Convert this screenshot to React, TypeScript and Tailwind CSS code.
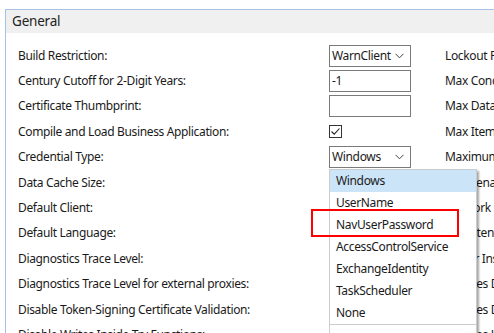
import React from 'react';

type Row = {
  label: string;
  control: React.ReactNode;
  right: string;
};

const font = { fontFamily: '"Noto Sans", "Open Sans", sans-serif' };

function Chevron(): React.ReactElement {
  return (
    <svg width="9" height="6" viewBox="0 0 9 6" className="shrink-0">
      <path d="M0.5 0.8 L4.5 4.8 L8.5 0.8" fill="none" stroke="#444" strokeWidth="1" />
    </svg>
  );
}

function Select({ value }: { value: string }): React.ReactElement {
  return (
    <div className="flex h-[22px] w-[82px] items-center justify-between border border-[#7a7a7a] bg-white pl-[2px] pr-[6px]">
      <span>{value}</span>
      <Chevron />
    </div>
  );
}

function TextBox({ value }: { value: string }): React.ReactElement {
  return (
    <div className="flex h-[22px] w-[82px] items-center border border-[#7a7a7a] bg-white pl-[2px]">
      {value}
    </div>
  );
}

function CheckBox(): React.ReactElement {
  return (
    <div className="flex h-[13px] w-[13px] items-center justify-center border border-[#333] bg-white">
      <svg width="11" height="11" viewBox="0 0 11 11">
        <path d="M1.5 5.5 L4.2 8.2 L9.5 2.5" fill="none" stroke="#222" strokeWidth="1.1" />
      </svg>
    </div>
  );
}

const options = [
  'Windows',
  'UserName',
  'NavUserPassword',
  'AccessControlService',
  'ExchangeIdentity',
  'TaskScheduler',
  'None',
];

function DropDown(): React.ReactElement {
  return (
    <div className="absolute left-0 top-[23px] z-10 w-[148px] border border-[#cccccc] bg-white shadow-[2px_2px_2px_rgba(0,0,0,0.35)]">
      {options.map((o, i) => (
        <div
          key={o}
          className={`flex h-[22px] items-center pl-[6px] ${i === 0 ? 'bg-[#cce4f7]' : ''}`}
        >
          {o}
        </div>
      ))}
      <div className="h-[1px] bg-[#cccccc]" />
      <div className="h-[30px]" />
    </div>
  );
}

const rows: Row[] = [
  { label: 'Build Restriction:', control: <Select value="WarnClient" />, right: 'Lockout Policy Count:' },
  { label: 'Century Cutoff for 2-Digit Years:', control: <TextBox value="-1" />, right: 'Max Concurrent Calls:' },
  { label: 'Certificate Thumbprint:', control: <TextBox value="" />, right: 'Max Data Rows Allowed:' },
  { label: 'Compile and Load Business Application:', control: <CheckBox />, right: 'Max Items in Object Graph:' },
  {
    label: 'Credential Type:',
    control: (
      <div className="relative">
        <Select value="Windows" />
        <DropDown />
      </div>
    ),
    right: 'Maximum Stream Size:',
  },
  { label: 'Data Cache Size:', control: null, right: 'Multitenant:' },
  { label: 'Default Client:', control: null, right: 'Network Protocol:' },
  { label: 'Default Language:', control: null, right: 'Persistent Interval:' },
  { label: 'Diagnostics Trace Level:', control: null, right: 'Server Instance:' },
  { label: 'Diagnostics Trace Level for external proxies:', control: null, right: 'Services Default Company:' },
  { label: 'Disable Token-Signing Certificate Validation:', control: null, right: 'Services Default Time Zone:' },
  { label: 'Disable Writes Inside Try Functions:', control: null, right: 'Services Language:' },
];

export default function App(): React.ReactElement {
  return (
    <div
      className="relative h-[333px] w-[494px] overflow-hidden bg-white pl-[5px] pt-[9px] text-[12px] tracking-[-0.35px] text-[#1a1a1a]"
      style={font}
    >
      <div className="h-full border-l border-t border-[#a7c0e3]">
        <div className="flex h-[23px] items-center bg-[#f0f0f0] pl-[6px] text-[13.5px] tracking-[-0.2px] text-[#222]">
          General
        </div>
        <div className="pl-[12px] pt-[10px]">
          {rows.map((r) => (
            <div key={r.label} className="flex h-[25.4px] items-center">
              <div className="w-[311px] shrink-0 whitespace-nowrap">{r.label}</div>
              <div className="flex w-[116px] shrink-0 items-center">{r.control}</div>
              <div className="whitespace-nowrap">{r.right}</div>
            </div>
          ))}
        </div>
      </div>
      <div className="absolute left-[311px] top-[209px] z-20 h-[28px] w-[148px] border-2 border-[#ff0000]" />
    </div>
  );
}
